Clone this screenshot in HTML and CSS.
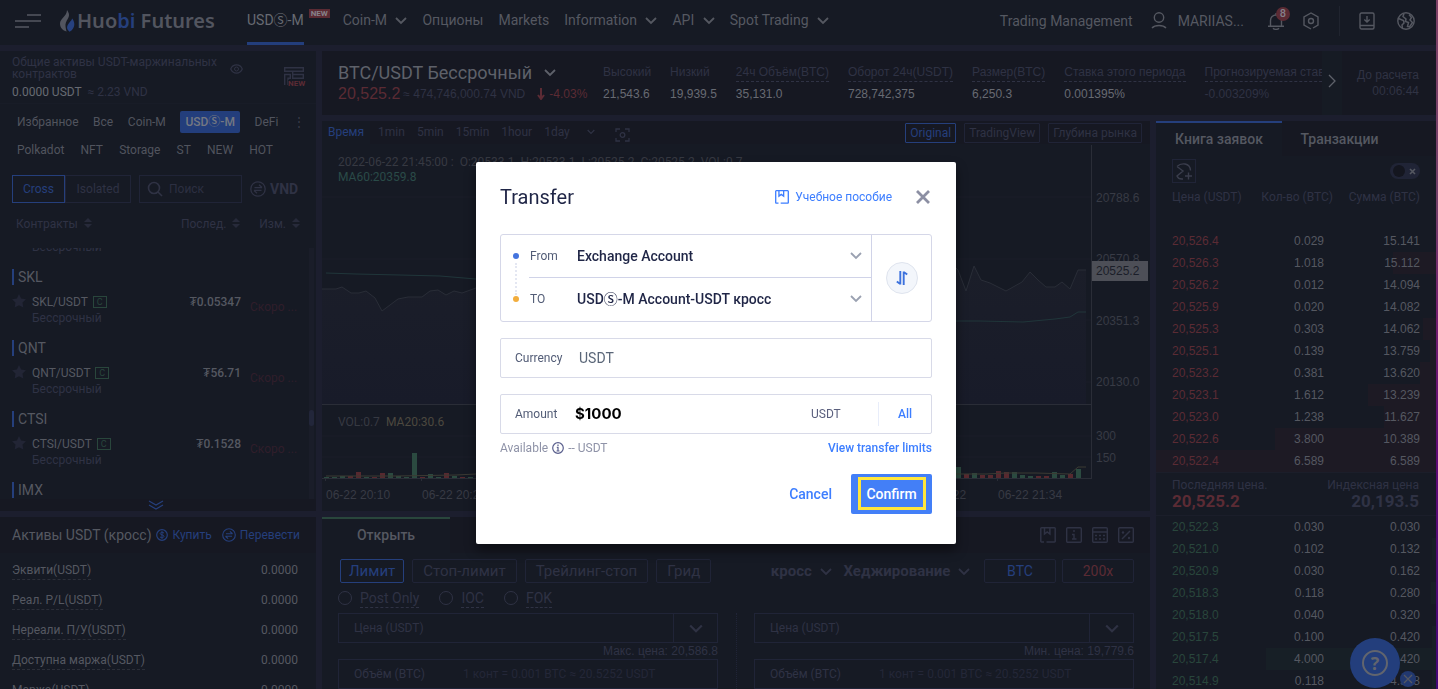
FILE: index.html
```html
<!DOCTYPE html>
<html lang="ru">
<head>
<meta charset="utf-8">
<title>Huobi Futures</title>
<link rel="stylesheet" href="styles.css">
</head>
<body>
<svg class="defs" aria-hidden="true">
  <symbol id="chev" viewBox="0 0 12 8"><path d="M1 1l5 5 5-5" fill="none" stroke="currentColor" stroke-width="1.8"/></symbol>
  <symbol id="star" viewBox="0 0 14 14"><path d="M7 0l2.1 4.5 4.9.7-3.5 3.4.8 5L7 11.200l-4.300 2.400.8-5L0 5.200l4.900-.7z" fill="currentColor"/></symbol>
  <symbol id="sort" viewBox="0 0 8 10"><path d="M4 0l4 4H0zM4 10l4-4H0z" fill="currentColor"/></symbol>
  <symbol id="book" viewBox="0 0 16 16"><path d="M4 15H1.500a.7.7 0 0 1-.7-.7V1.500a.7.7 0 0 1 .7-.7h13a.7.7 0 0 1 .7.7v12.800a.7.7 0 0 1-.7.7H6.500M4.500 1v6l2.700-2 2.700 2V1" fill="none" stroke="currentColor" stroke-width="1.5"/></symbol>
  <symbol id="swap" viewBox="0 0 16 16"><circle cx="8" cy="8" r="7.200" fill="none" stroke="currentColor" stroke-width="1.300"/><path d="M12 6.600H4.500M9 3.800l3 2.800M4 9.400h7.500M7 12.200L4 9.400" fill="none" stroke="currentColor" stroke-width="1.300"/></symbol>
</svg>

<div class="app">
<header class="top">
  <button class="burger" aria-label="Menu"><svg width="26" height="14" viewBox="0 0 26 14"><path d="M12 1h14M0 7h26M0 13h14" stroke="currentColor" stroke-width="1.600"/></svg></button>
  <a class="logo" href="#"><svg width="15" height="22" viewBox="0 0 15 22"><path d="M7 0c2.500 3.500 2.600 5.600 1 8.600C6.300 11.600 5 13.600 5.600 17c.2 1.700.5 3 1 4.600C3 20.500 0 18 0 13.500 0 8.600 6.800 6.500 7 0z" fill="#52555f"/><path d="M12.200 8.500c3 3.500 3.400 10-2.600 13.200-2.500-1.800-3.400-4.300-1.600-7.300 1.300-2.100 3.300-3.400 4.200-5.900z" fill="#26417f"/></svg><span>Huo<b>bi</b> Futures</span></a>
  <nav class="nav">
    <a class="on" href="#">USDⓈ-M<i class="new">NEW</i></a>
    <a href="#">Coin-M <svg class="chev"><use href="#chev"/></svg></a>
    <a href="#">Опционы</a>
    <a href="#">Markets</a>
    <a href="#">Information <svg class="chev"><use href="#chev"/></svg></a>
    <a href="#">API <svg class="chev"><use href="#chev"/></svg></a>
    <a href="#">Spot Trading <svg class="chev"><use href="#chev"/></svg></a>
  </nav>
  <div class="tools">
    <a href="#">Trading Management</a>
    <a class="user" href="#"><svg width="16" height="17" viewBox="0 0 16 17"><circle cx="8" cy="5.500" r="4.700" fill="none" stroke="currentColor" stroke-width="1.400"/><path d="M1 16c3-3.300 11-3.300 14 0" fill="none" stroke="currentColor" stroke-width="1.400"/></svg>MARIIAS...</a>
    <button class="bell" aria-label="Notifications"><svg width="16" height="18" viewBox="0 0 16 18"><path d="M8 1v2M0 14.200h16M2.500 14V8.500a5.500 5.500 0 0 1 11 0V14M5 16.200c1.500 1.500 4.500 1.500 6 0" fill="none" stroke="currentColor" stroke-width="1.400"/></svg><span class="count">8</span></button>
    <button class="hex" aria-label="Settings"><svg width="16" height="18" viewBox="0 0 16 18"><path d="M10 16l5-3V5L8 1 1 5v8l7 4" fill="none" stroke="currentColor" stroke-width="1.400"/><circle cx="8" cy="9" r="2.500" fill="none" stroke="currentColor" stroke-width="1.400"/></svg></button>
    <span class="bar"></span>
    <button class="dl" aria-label="Download"><svg width="16" height="18" viewBox="0 0 16 18"><rect x="1" y="1" width="14" height="16" rx="1.500" fill="none" stroke="currentColor" stroke-width="1.400"/><path d="M8 4v6M5.300 7.500L8 10l2.700-2.500M1 13.500h14" fill="none" stroke="currentColor" stroke-width="1.400"/></svg></button>
    <button aria-label="Language"><svg width="18" height="18" viewBox="0 0 18 18"><circle cx="9" cy="9" r="8.200" fill="none" stroke="currentColor" stroke-width="1.400"/><path d="M1.500 6.500l5 2 .5 2.500-2 2 .5 3.500M7 1.500l-1 3 3 2.500-.5 2.500 3 1-1 4 2 .5 3-4.500-2.500-2.500 1.500-2.500-2.500-3" fill="none" stroke="currentColor" stroke-width="1.500"/></svg></button>
  </div>
</header>

<main class="main">
  <aside class="left">
    <section class="panel markets">
      <div class="total">
        <div class="total-text"><p class="dim">Общие активы USDT-маржинальных контрактов</p><p><span class="lit">0.0000 USDT</span> <span class="dim vnd">≈ 2.23 VND</span></p></div>
        <svg class="eye" width="13" height="10" viewBox="0 0 13 10"><path d="M.7 5C3-.4 10-.4 12.300 5 10 10.400 3 10.400.7 5z" fill="none" stroke="currentColor" stroke-width="1.200"/><circle cx="6.500" cy="5" r="2" fill="none" stroke="currentColor"/></svg>
        <div class="grid-new"><svg width="20" height="18" viewBox="0 0 20 18"><path d="M.7.7h18.600v3.600H.7zM.7 18V7.500h5.600v3.800H4V18M8.700 4.500v3M8.700 7.500h10.600v3.800H8.700z" fill="none" stroke="currentColor" stroke-width="1.400"/></svg><b>NEW</b></div>
      </div>
      <div class="cats">
        <div class="cat-row r1"><button>Избранное</button><button>Все</button><button>Coin-M</button><button class="on">USDⓈ-M</button><button>DeFi</button><button class="more" aria-label="More">⋮</button></div>
        <div class="cat-row r2"><button>Polkadot</button><button>NFT</button><button>Storage</button><button>ST</button><button>NEW</button><button>HOT</button></div>
      </div>
      <div class="filter">
        <div class="seg"><button class="on">Cross</button><button>Isolated</button></div>
        <label class="search"><svg width="16" height="16" viewBox="0 0 16 16"><circle cx="7" cy="7" r="5.500" fill="none" stroke="currentColor" stroke-width="1.600"/><path d="M11 11l4 4" stroke="currentColor" stroke-width="1.600"/></svg><input type="text" placeholder="Поиск" aria-label="Поиск"></label>
        <button class="cur"><svg width="16" height="16"><use href="#swap"/></svg>VND</button>
      </div>
      <div class="list-head"><span>Контракты <svg class="sort"><use href="#sort"/></svg></span><span>Послед. <svg class="sort"><use href="#sort"/></svg></span><span>Изм. <svg class="sort"><use href="#sort"/></svg></span></div>
      <div class="list">
        <div class="list-in">
          <p class="cut">Бессрочный</p>
          <h3>SKL</h3>
          <div class="pair"><svg class="star"><use href="#star"/></svg><div><p class="name">SKL/USDT <em>C</em></p><p class="dim">Бессрочный</p></div><span class="price">₮0.05347</span><span class="soon">Скоро ...</span></div>
          <h3>QNT</h3>
          <div class="pair"><svg class="star"><use href="#star"/></svg><div><p class="name">QNT/USDT <em>C</em></p><p class="dim">Бессрочный</p></div><span class="price">₮56.71</span><span class="soon">Скоро ...</span></div>
          <h3>CTSI</h3>
          <div class="pair"><svg class="star"><use href="#star"/></svg><div><p class="name">CTSI/USDT <em>C</em></p><p class="dim">Бессрочный</p></div><span class="price">₮0.1528</span><span class="soon">Скоро ...</span></div>
          <h3>IMX</h3>
        </div>
        <div class="track"><span></span></div>
      </div>
      <div class="fold"><svg width="16" height="10" viewBox="0 0 16 10"><path d="M1 1l7 4 7-4M1 5l7 4 7-4" fill="none" stroke="currentColor" stroke-width="1.200"/></svg></div>
    </section>

    <section class="panel assets">
      <div class="assets-head"><h2>Активы USDT (кросс)</h2><a href="#"><svg width="12" height="12" viewBox="0 0 12 12"><circle cx="6" cy="6" r="5.300" fill="none" stroke="currentColor" stroke-width="1.200"/><path d="M8 4C6.500 3 4.200 3.300 4.200 4.600 4.200 6.300 8 5.400 8 7.300 8 8.700 5.500 9 4 8M6 2v8" fill="none" stroke="currentColor"/></svg>Купить</a><a href="#"><svg width="14" height="14"><use href="#swap"/></svg>Перевести</a></div>
      <dl>
        <div><dt>Эквити(USDT)</dt><dd>0.0000</dd></div>
        <div><dt>Реал. P/L(USDT)</dt><dd>0.0000</dd></div>
        <div><dt>Нереали. П/У(USDT)</dt><dd>0.0000</dd></div>
        <div><dt>Доступна маржа(USDT)</dt><dd>0.0000</dd></div>
        <div><dt>Маржа(USDT)</dt><dd>0.0000</dd></div>
      </dl>
    </section>
  </aside>

  <div class="work">
    <section class="panel ticker">
      <div class="sym">
        <button class="sym-name">BTC/USDT Бессрочный <svg class="chev"><use href="#chev"/></svg></button>
        <p class="quote"><b>20,525.2</b><span>≈ 474,746,000.74 VND</span><svg width="8" height="12" viewBox="0 0 8 12"><path d="M4 0v10M1 7l3 4 3-4" fill="none" stroke="currentColor" stroke-width="2"/></svg><i>-4.03%</i></p>
      </div>
      <div class="stats">
        <div><span>Высокий</span><b>21,543.6</b></div>
        <div><span>Низкий</span><b>19,939.5</b></div>
        <div><span class="tip">24ч Объём(BTC)</span><b>35,131.0</b></div>
        <div><span class="tip">Оборот 24ч(USDT)</span><b>728,742,375</b></div>
        <div><span class="tip">Размер(BTC)</span><b>6,250.3</b></div>
        <div><span class="tip">Ставка этого периода</span><b>0.001395%</b></div>
        <div><span class="tip">Прогнозируемая ставка</span><b class="off">-0.003209%</b></div>
      </div>
      <button class="next" aria-label="Next"><svg width="8" height="14" viewBox="0 0 8 14"><path d="M1 1l6 6-6 6" fill="none" stroke="currentColor" stroke-width="1.300"/></svg></button>
      <div class="settle"><span>До расчета</span><span>00:06:44</span></div>
    </section>

    <div class="desk">
      <div class="mid">
        <section class="panel chart">
          <div class="chart-bar">
            <button class="on">Время</button><button>1min</button><button>5min</button><button>15min</button><button>1hour</button><button>1day</button>
            <button class="more-t" aria-label="More"><svg class="chev"><use href="#chev"/></svg></button>
            <button class="snap" aria-label="Snapshot"><svg width="15" height="14" viewBox="0 0 15 14"><path d="M1 4V1h4M10 1h4v3M14 10v3h-4M5 13H1v-3" fill="none" stroke="currentColor" stroke-width="1.300"/><circle cx="7.500" cy="7" r="2.300" fill="none" stroke="currentColor" stroke-width="1.300"/></svg></button>
            <span class="views"><button class="on">Original</button><button>TradingView</button><button>Глубина рынка</button></span>
          </div>
          <svg class="plot" viewBox="322 144 828 367">
            <defs><linearGradient id="area" x1="0" y1="0" x2="0" y2="1"><stop offset="0" stop-color="#1b1e29"/><stop offset="1" stop-color="#181b29"/></linearGradient></defs>
            <path d="M322 197h769M322 259h769M322 320h769M322 382h769M322 436h769M322 457h769" stroke="#1a1d29"/>
            <path d="M322 404V289h14l6-2 9 6h8l7-2 9 7 7 13 16-12 10-2h14l8-6 8-1 8 5 8-4 8 2 14-5L956 268l2 2 8 21 8-25 7 14 9 3 16 8 16-9 8-10 8 8 8 7h9l7-5 8 7 8-19h8V404z" fill="url(#area)"/>
            <path d="M322 289h14l6-2 9 6h8l7-2 9 7 7 13 16-12 10-2h14l8-6 8-1 8 5 8-4 8 2 14-5M956 268l2 2 8 21 8-25 7 14 9 3 16 8 16-9 8-10 8 8 8 7h9l7-5 8 7 8-19h8" fill="none" stroke="#292d37"/>
            <path d="M326 273l30 1 44 1 40 1 36 3M956 321h24l43 1 32-3 15-2 8-5h8" fill="none" stroke="#20363a"/>
            <path d="M322 404.500h770M1091.500 145v333M322 478.500h770M325.500 478v3M421.500 478v3M997.500 478v3" stroke="#2a2d37" fill="none"/>
            <path d="M324 477h5v1h-5zM332 477h5v1h-5zM340 476h5v2h-5zM364 477h5v1h-5zM388 473h5v5h-5zM396 476h5v2h-5zM404 477h5v1h-5zM412 453h5v25h-5zM428 474h5v4h-5zM436 477h5v1h-5zM452 476h5v2h-5zM468 477h5v1h-5zM956 467h5v11h-5zM972 473h5v5h-5zM1012 472h5v6h-5zM1020 475h5v3h-5zM1028 476h5v2h-5zM1052 472h5v6h-5zM1060 475h5v3h-5zM1076 469h5v9h-5z" fill="#2b4a40"/>
            <path d="M348 476h5v2h-5zM356 472h5v6h-5zM372 477h5v1h-5zM380 473h5v5h-5zM420 477h5v1h-5zM444 473h5v5h-5zM460 477h5v1h-5zM964 474h5v4h-5zM980 475h5v3h-5zM988 475h5v3h-5zM996 471h5v7h-5zM1004 472h5v6h-5zM1036 476h5v2h-5zM1044 476h5v2h-5zM1068 474h5v4h-5z" fill="#57292f"/>
            <path d="M326 476h70l60-1 20-1M956 474h30l20-1h30l34 1 8-7h8" fill="none" stroke="#3b3a33"/>
            <g class="t-info"><text x="338" y="166">2022-06-22 21:45:00 :&#160; O:20533.1&#160; H:20533.1&#160; L:20525.2&#160; C:20525.2&#160; VOL:0.7</text><text x="338" y="181" class="ma60">MA60:20359.8</text><text x="338" y="426">VOL:0.7</text><text x="386" y="426" class="ma20">MA20:30.6</text></g>
            <g class="t-axis"><text x="1096" y="202">20788.6</text><text x="1096" y="263">20570.8</text><rect x="1092" y="261" width="56" height="20" fill="#4d4f57"/><text x="1096" y="275" class="tag">20525.2</text><text x="1096" y="325">20351.3</text><text x="1096" y="386">20130.0</text><text x="1096" y="440">300</text><text x="1096" y="462">150</text><text x="326" y="499">06-22 20:10</text><text x="422" y="499">06-22 20:22</text><text x="902" y="499">06-22 21:22</text><text x="998" y="499">06-22 21:34</text></g>
          </svg>
        </section>

        <section class="panel order">
          <div class="order-tabs"><button class="on">Открыть</button>
            <span class="order-icons">
              <svg width="16" height="16"><use href="#book"/></svg>
              <svg width="16" height="16" viewBox="0 0 16 16"><rect x=".7" y=".7" width="14.600" height="14.600" rx="1" fill="none" stroke="currentColor" stroke-width="1.400"/><path d="M8 3v2M6 7.500h2V12M6 12h4.500" fill="none" stroke="currentColor" stroke-width="1.400"/></svg>
              <svg width="16" height="16" viewBox="0 0 16 16"><rect x=".7" y=".7" width="14.600" height="14.600" rx="1" fill="none" stroke="currentColor" stroke-width="1.400"/><path d="M1 5h14M3 8.500h2M7 8.500h2M11 8.500h2M3 12h2M7 12h2M11 12h2" fill="none" stroke="currentColor" stroke-width="1.700"/></svg>
              <svg width="16" height="16" viewBox="0 0 16 16"><rect x=".7" y=".7" width="14.600" height="14.600" rx="1" fill="none" stroke="currentColor" stroke-width="1.400"/><path d="M4 12l8-8" stroke="currentColor" stroke-width="1.400"/><circle cx="5" cy="5.500" r="1.200" fill="currentColor"/><circle cx="11" cy="11" r="1.200" fill="currentColor"/></svg>
            </span>
          </div>
          <div class="order-body">
            <div class="types">
              <button class="on">Лимит</button><button>Стоп-лимит</button><button>Трейлинг-стоп</button><button>Грид</button>
              <span class="modes"><button class="mode">кросс <svg class="chev"><use href="#chev"/></svg></button><button class="mode">Хеджирование <svg class="chev"><use href="#chev"/></svg></button><button class="blue">BTC</button><button class="red">200x</button></span>
            </div>
            <div class="tif"><label><input type="radio" name="tif"><span>Post Only</span></label><label><input type="radio" name="tif"><span>IOC</span></label><label><input type="radio" name="tif"><span>FOK</span></label></div>
            <div class="forms">
              <div class="form">
                <div class="field"><input type="text" placeholder="Цена (USDT)" aria-label="Цена покупки"><button aria-label="Тип цены"><svg class="chev"><use href="#chev"/></svg></button></div>
                <p class="note">Макс. цена: 20,586.8</p>
                <label class="field vol"><span>Объём (BTC)</span><input type="text" placeholder="1 конт = 0.001 BTC ≈ 20.5252 USDT"></label>
              </div>
              <div class="form">
                <div class="field"><input type="text" placeholder="Цена (USDT)" aria-label="Цена продажи"><button aria-label="Тип цены"><svg class="chev"><use href="#chev"/></svg></button></div>
                <p class="note">Мин. цена: 19,779.6</p>
                <label class="field vol"><span>Объём (BTC)</span><input type="text" placeholder="1 конт = 0.001 BTC ≈ 20.5252 USDT"></label>
              </div>
            </div>
          </div>
        </section>
      </div>

      <section class="panel ob">
        <div class="ob-tabs"><button class="on">Книга заявок</button><button>Транзакции</button></div>
        <div class="ob-tools"><button class="sum" aria-label="Сумма"><svg width="16" height="17" viewBox="0 0 16 17"><path d="M1 3.500C5-.5 14-.5 14.500 7.500M1 3.500l6 4.500-6 5c1 2.500 3.500 3.300 6 3M9 13h7M12.500 9.500v7" fill="none" stroke="currentColor" stroke-width="1.400"/></svg></button><button class="toggle" aria-label="Переключатель"><span></span><svg width="7" height="7" viewBox="0 0 7 7"><path d="M1 1l5 5M6 1L1 6" stroke="currentColor" stroke-width="1.600"/></svg></button></div>
        <table class="ob-table">
          <thead><tr><th>Цена (USDT)</th><th>Кол-во (BTC)</th><th>Сумма (BTC)</th></tr></thead>
          <tbody class="asks">
            <tr><td>20,526.4</td><td>0.029</td><td>15.141</td></tr>
            <tr style="--d:43px"><td>20,526.3</td><td>1.018</td><td>15.112</td></tr>
            <tr><td>20,526.2</td><td>0.012</td><td>14.094</td></tr>
            <tr><td>20,525.9</td><td>0.020</td><td>14.082</td></tr>
            <tr style="--d:13px"><td>20,525.3</td><td>0.303</td><td>14.062</td></tr>
            <tr style="--d:6px"><td>20,525.1</td><td>0.139</td><td>13.759</td></tr>
            <tr style="--d:16px"><td>20,523.2</td><td>0.381</td><td>13.620</td></tr>
            <tr style="--d:68px"><td>20,523.1</td><td>1.612</td><td>13.239</td></tr>
            <tr style="--d:52px"><td>20,523.0</td><td>1.238</td><td>11.627</td></tr>
            <tr style="--d:161px"><td>20,522.6</td><td>3.800</td><td>10.389</td></tr>
            <tr style="--d:280px"><td>20,522.4</td><td>6.589</td><td>6.589</td></tr>
          </tbody>
        </table>
        <div class="last"><div><span>Последняя цена.</span><b>20,525.2</b></div><div><span>Индексная цена</span><b>20,193.5</b></div></div>
        <table class="ob-table">
          <tbody class="bids">
            <tr><td>20,522.3</td><td>0.030</td><td>0.030</td></tr>
            <tr style="--d:4px"><td>20,521.0</td><td>0.102</td><td>0.132</td></tr>
            <tr><td>20,520.9</td><td>0.030</td><td>0.162</td></tr>
            <tr style="--d:5px"><td>20,518.3</td><td>0.118</td><td>0.280</td></tr>
            <tr><td>20,518.0</td><td>0.040</td><td>0.320</td></tr>
            <tr style="--d:4px"><td>20,517.5</td><td>0.100</td><td>0.420</td></tr>
            <tr style="--d:170px"><td>20,517.4</td><td>4.000</td><td>4.420</td></tr>
            <tr style="--d:4px"><td>20,514.9</td><td>0.118</td><td>4.538</td></tr>
          </tbody>
        </table>
      </section>
    </div>
  </div>
</main>
</div>

<button class="help" aria-label="Помощь"><span>?</span></button>
<button class="help-x" aria-label="Закрыть"><svg width="10" height="10" viewBox="0 0 10 10"><path d="M1 1l8 8M9 1L1 9" stroke="currentColor" stroke-width="1.200"/></svg></button>

<div class="overlay">
  <form class="modal" role="dialog" aria-labelledby="dlg">
    <div class="m-head"><h1 id="dlg">Transfer</h1><a href="#"><svg width="14" height="14"><use href="#book"/></svg>Учебное пособие</a><button type="button" class="x" aria-label="Close"><svg width="14" height="14" viewBox="0 0 14 14"><path d="M1 1l12 12M13 1L1 13" stroke="currentColor" stroke-width="2.800"/></svg></button></div>
    <div class="route">
      <div class="rail"><i></i><i></i></div>
      <div class="ends">
        <div class="end"><label for="from">From</label><select id="from"><option>Exchange Account</option></select><svg class="chev"><use href="#chev"/></svg></div>
        <div class="end"><label for="to">TO</label><select id="to"><option>USDⓈ-M Account-USDT кросс</option></select><svg class="chev"><use href="#chev"/></svg></div>
      </div>
      <div class="flip"><button type="button" aria-label="Swap"><svg width="12" height="16" viewBox="0 0 12 16"><path d="M4.300 1v13.500M4.300 14L.8 11.500M7.700 15V1.500M7.700 2l3.500 2.500" fill="none" stroke="currentColor" stroke-width="1.900"/></svg></button></div>
    </div>
    <div class="box"><label for="ccy">Currency</label><input id="ccy" type="text" value="USDT"></div>
    <div class="box"><label for="amt">Amount</label><input id="amt" class="amt" type="text" value="$1000"><span class="unit">USDT</span><button type="button" class="all">All</button></div>
    <div class="avail"><span>Available <svg width="12" height="12" viewBox="0 0 12 12"><circle cx="6" cy="6" r="5.300" fill="none" stroke="currentColor" stroke-width="1.200"/><path d="M6 2.500v1.400M4.800 5.300H6V9M4.500 9h3" fill="none" stroke="currentColor" stroke-width="1.200"/></svg> <span class="none">-- USDT</span></span><a href="#">View transfer limits</a></div>
    <div class="acts"><button type="button" class="cancel">Cancel</button><button type="submit" class="ok">Confirm</button></div>
  </form>
</div>
</body>
</html>
```
FILE: styles.css
```css
* { box-sizing: border-box; margin: 0; padding: 0; }
:root {
  --gap: #1c1e2e;
  --panel: #161a24;
  --deep: #161822;
  --line: #202437;
  --dim: #2f3244;
  --text: #555861;
  --blue: #253f7c;
  --red: #5b2b34;
  --green: #29463c;
  --ui: Roboto, "Noto Sans CJK SC", sans-serif;
  --num: "Liberation Sans", Arial, sans-serif;
}
body { background: var(--gap); color: var(--text); font: 12px/16px var(--ui); height: 100vh; overflow: hidden; }
button, input, select { font: inherit; color: inherit; background: none; border: 0; outline: 0; }
input { min-width: 0; }
a { color: inherit; text-decoration: none; }
i, em { font-style: normal; }
svg { flex: none; }
.defs { position: absolute; width: 0; height: 0; }
.chev { width: 12px; height: 8px; }
.dim { color: var(--dim); }
.app { height: 100%; display: flex; flex-direction: column; gap: 6px; border-right: 2px solid; border-image: linear-gradient(#7e4167, #74406a 30%, #75206f 45%, #600b75 65%, #430777) 1; }
.panel { background: var(--panel); }

.top { height: 45px; flex: none; background: var(--panel); display: flex; align-items: center; padding: 0 21px 4px 15px; font-size: 14px; }
.burger { display: flex; }
.logo { display: flex; align-items: center; gap: 2px; margin-left: 19px; width: 187px; font: 600 20px/24px "Noto Sans", sans-serif; color: #52555f; }
.logo b { font-weight: inherit; color: var(--blue); }
.nav { display: flex; gap: 15px; flex: 1; white-space: nowrap; }
.nav a { line-height: 41px; height: 45px; margin-top: 4px; }
.nav .chev { margin-left: 5px; }
.nav .on { position: relative; border-bottom: 3px solid #233e7c; color: #676a72; margin-right: 24px; }
.new { position: absolute; left: 100%; top: 9px; margin-left: 5px; padding: 0 2px; height: 9px; font: 700 8px/9px var(--ui); background: var(--red); color: #86828a; }
.tools { display: flex; align-items: center; }
.tools button { display: flex; position: relative; }
.user { display: flex; align-items: center; gap: 11px; margin: 0 24px 0 18px; }
.count { position: absolute; left: 8px; top: -5px; width: 14px; height: 14px; border-radius: 50%; background: #5b2b34; font: 500 11px/14px var(--ui); text-align: center; color: #85808a; }
.hex { margin-left: 19px; }
.bar { width: 1px; height: 30px; background: #20242f; margin: 0 19px 0 20px; }
.dl { margin-right: 22px; }

.main { flex: 1; min-height: 0; display: grid; grid-template-columns: 316px minmax(0, 1fr); gap: 6px; }
.left { display: flex; flex-direction: column; gap: 6px; min-height: 0; }
.markets { height: 460px; flex: none; display: flex; flex-direction: column; }
.total { height: 53px; display: flex; padding: 5px 9px 0 12px; border-bottom: 1px solid #181c27; }
.total-text { width: 218px; line-height: 12px; }
.total-text p + p { margin-top: 5px; line-height: 14px; }
.lit { color: #676a72; }
.vnd { margin-left: 3px; }
.eye { margin: 8px 0 0; color: var(--dim); }
.grid-new { margin: 11px 0 0 41px; position: relative; color: var(--dim); }
.grid-new b { position: absolute; left: 4px; top: 13px; font: 700 8px/8px var(--ui); background: var(--panel); color: #5b2b34; }
.cats { padding: 7px 12px 0; }
.cat-row { display: flex; justify-content: space-between; align-items: center; height: 22px; }
.cat-row button { color: #51545e; }
.cat-row .on { background: #233e7c; height: 22px; padding: 0 5px; border-radius: 2px; color: #747882; }
.r1 { padding: 0 1px 0 5px; }
.r1 .on { font-weight: 500; }
.r2 { margin-top: 6px; padding: 0 31px 0 5px; }
.cat-row .more { width: 10px; color: #3a3d4a; }
.filter { display: flex; align-items: center; margin: 14px 15px 0 12px; height: 28px; color: var(--dim); }
.seg { display: flex; }
.seg button { height: 28px; width: 66px; border: 1px solid var(--line); }
.seg .on { width: 53px; border-color: #253f7c; color: #253f7c; }
.search { display: flex; align-items: center; gap: 6px; width: 103px; height: 28px; border: 1px solid var(--line); margin: 0 8px; padding-left: 7px; }
.search input { width: 60px; }
::placeholder { color: #2c2f41; opacity: 1; }
.cur { display: flex; align-items: center; gap: 4px; font-weight: 700; font-size: 14px; }
.list-head { display: flex; justify-content: space-between; padding: 13px 16px 0; height: 45px; color: var(--dim); }
.list-head span:nth-child(2) { margin-left: 70px; }
.sort { width: 8px; height: 10px; margin-left: 3px; color: #272a3a; }
.list { height: 251px; display: flex; overflow: hidden; }
.list-in { flex: 1; padding: 0 9px 0 12px; }
.cut { margin: -10px 0 11px 20px; height: 20px; line-height: 18px; color: var(--dim); }
.list h3 { font: 400 14px/16px var(--ui); border-left: 2px solid #253f7c; padding-left: 4px; margin-bottom: 9px; }
.pair { display: flex; height: 46px; line-height: 16px; }
.star { width: 14px; height: 14px; margin: 0 6px 0 0; color: #222535; }
.price { margin-left: auto; font-weight: 500; }
.name { height: 16px; }
.name em { display: inline-block; width: 14px; height: 12px; border: 1px solid var(--green); font-size: 9px; line-height: 10px; text-align: center; color: var(--green); margin-left: 2px; vertical-align: 1px; }
.soon { color: #301e2b; width: 50px; margin: 5px 0 0 9px; }
.track { width: 5px; margin-right: 2px; background: #1a1d29; }
.track span { display: block; height: 16px; margin-top: 162px; border-radius: 3px; background: #22263a; }
.fold { height: 12px; background: var(--deep); display: grid; place-items: center; color: #253f7c; padding-right: 4px; }

.assets { flex: 1; min-height: 0; overflow: hidden; }
.assets-head { height: 36px; background: var(--deep); display: flex; align-items: center; padding: 0 16px 0 12px; color: #253f7c; }
.assets-head h2 { font: 400 14px/20px var(--ui); color: var(--text); margin-right: auto; }
.assets-head a { display: flex; align-items: center; gap: 4px; margin-left: 4px; }
.assets-head a + a { margin-left: 10px; }
.assets dl { padding: 2px 18px 0 12px; }
.assets dl div { display: flex; justify-content: space-between; align-items: center; height: 30px; }
.assets dt { border-bottom: 1px dashed #2b2e38; padding-top: 2px; height: 20px; }

.work { display: flex; flex-direction: column; gap: 6px; min-width: 0; min-height: 0; }
.ticker { height: 64px; flex: none; display: flex; padding-left: 16px; background: var(--deep); font-family: var(--num); white-space: nowrap; }
.sym { width: 265px; padding-top: 10px; }
.sym-name { font: 400 18px/24px var(--ui); color: #5e616a; display: flex; align-items: center; gap: 12px; }
.quote { display: flex; align-items: center; line-height: 18px; color: var(--dim); }
.quote b { font: 400 16px/18px var(--num); color: var(--red); margin-right: 3px; }
.quote svg { margin: 0 4px 0 12px; color: var(--red); }
.quote i { color: var(--red); }
.stats { display: flex; gap: 19px; flex: 1; overflow: hidden; padding-top: 12px; }
.stats div { display: flex; flex-direction: column; align-items: flex-start; gap: 4px; }
.stats span { height: 19px; line-height: 18px; color: var(--dim); }
.stats .tip { border-bottom: 1px dashed var(--dim); }
.stats b { font-weight: 400; line-height: 16px; color: #676a72; }
.stats .off { color: var(--dim); }
.next { width: 20px; background: #161b24; color: #5e616a; }
.settle { width: 94px; padding: 16px 17px 0 0; text-align: right; display: flex; flex-direction: column; color: #303344; }

.desk { flex: 1; min-height: 0; display: grid; grid-template-columns: minmax(0, 1fr) 280px; gap: 6px; }
.mid { display: flex; flex-direction: column; gap: 6px; min-height: 0; }
.chart { flex: none; }
.chart-bar { height: 23px; display: flex; align-items: center; color: var(--dim); background: var(--deep); }
.chart-bar button { margin-right: 12px; padding-bottom: 2px; }
.chart-bar .on { color: #253f7c; }
.chart-bar > .on { padding: 0 6px 2px; background: var(--panel); height: 23px; margin-right: 8px; }
.chart-bar .chev { width: 8px; }
.chart-bar .more-t { margin-left: 5px; }
.chart-bar .snap { margin: 4px 0 0 8px; padding: 0; display: flex; }
.views { margin-left: auto; display: flex; gap: 8px; padding-right: 8px; }
.views button { border: 1px solid var(--line); margin: 0; height: 20px; padding: 0 4px; border-radius: 1px; }
.views .on { border-color: #253f7c; }
.plot { display: block; width: 100%; }
.t-info { font: 12px var(--ui); fill: #363942; }
.ma60 { fill: #2a4b48; }
.ma20 { fill: #4c483f; }
.t-axis { font: 12px var(--num); fill: #383b45; }
.t-axis .tag { fill: #1b1e29; }

.order { flex: 1; min-height: 0; overflow: hidden; }
.order-tabs { height: 36px; display: flex; justify-content: space-between; background: var(--deep); }
.order-tabs button { width: 128px; border-top: 2px solid var(--green); padding-bottom: 2px; background: var(--panel); font-size: 14px; font-weight: 500; }
.order-icons { display: flex; gap: 10px; align-items: center; padding-right: 16px; color: var(--dim); }
.order-body { padding: 6px 16px 0; color: var(--dim); }
.types { display: flex; gap: 8px; height: 24px; font-size: 15px; padding-left: 2px; }
.types button { border: 1px solid var(--line); padding: 0 10px; border-radius: 2px; }
.types .on { border-color: #253f7c; color: #253f7c; padding: 0 8px; }
.modes { margin-left: auto; display: flex; gap: 6px; }
.types .mode { border: 0; padding: 0 6px 0 0; font-weight: 700; }
.mode .chev { margin-left: 4px; }
.modes .blue, .modes .red { width: 72px; font-size: 14px; padding: 0; }
.modes .blue { color: #253f7c; margin-left: 2px; }
.modes .red { color: var(--red); }
.tif { display: flex; gap: 20px; font-size: 14px; height: 30px; padding-top: 6px; }
.tif label { display: flex; gap: 8px; }
.tif input { appearance: none; width: 14px; height: 14px; border: 1px solid var(--dim); border-radius: 50%; margin-top: 2px; }
.tif span { border-bottom: 1px dashed var(--dim); line-height: 18px; height: 19px; }
.forms { display: grid; grid-template-columns: 1fr 1fr; gap: 36px; position: relative; }
.forms::before { content: ""; position: absolute; left: 50%; top: 0; bottom: 0; border-left: 1px dotted var(--line); }
.field { display: flex; height: 30px; border: 1px solid var(--line); padding-left: 15px; align-items: center; }
.field input { flex: 1; }
.field button { width: 44px; height: 28px; border-left: 1px solid var(--line); }
.field .chev { width: 14px; height: 10px; vertical-align: middle; }
.field > input:first-child::placeholder { color: var(--dim); }
.note { text-align: right; height: 16px; font-family: var(--num); line-height: 16px; }
.vol input { margin-left: 38px; }
.vol ::placeholder { color: #242738; }

.ob { overflow: hidden; }
.ob-tabs { height: 35px; display: flex; background: var(--deep); font-size: 14px; font-weight: 500; }
.ob-tabs button { width: 126px; height: 35px; border-top: 2px solid transparent; padding-bottom: 2px; }
.ob-tabs button + button { width: 115px; }
.ob-tabs .on { background: var(--panel); border-color: #253f7c; }
.ob-tools { display: flex; justify-content: space-between; align-items: center; padding: 3px 16px 0; height: 27px; }
.sum { width: 24px; height: 24px; border: 1px solid var(--line); display: grid; place-items: center; color: #3a3d4c; }
.toggle { width: 30px; height: 16px; border-radius: 8px; background: #202436; display: flex; align-items: center; gap: 4px; padding-left: 3px; }
.toggle span { width: 12px; height: 12px; border-radius: 50%; background: #14161f; }
.ob-table { width: 100%; border-collapse: collapse; table-layout: fixed; font-family: var(--num); white-space: nowrap; }
.ob-table th { font: 400 12px/16px var(--ui); color: var(--dim); height: 47px; padding: 6px 0 0; vertical-align: top; text-align: right; }
.ob-table td { height: 22px; text-align: right; }
.ob-table tr > :first-child { text-align: left; padding-left: 16px; width: 90px; }
.ob-table tr > :nth-child(2) { width: 87px; padding-right: 9px; }
.ob-table tr > :last-child { padding-right: 16px; }
.ob-table tr > th:nth-child(2) { padding-right: 0; }
.asks tr { background: linear-gradient(#1d1a24, #1d1a24) right / var(--d, 0) 100% no-repeat; }
.bids tr { background: linear-gradient(#171f26, #171f26) right / var(--d, 0) 100% no-repeat; }
.asks td:first-child { color: var(--red); }
.bids td:first-child { color: var(--green); }
.last { height: 44px; display: flex; justify-content: space-between; padding: 4px 17px 0 16px; border: solid #1b1e2a; border-width: 1px 0; color: var(--dim); }
.last div { display: flex; flex-direction: column; }
.last b { font: 700 17px/16px var(--ui); }
.last div:first-child b { color: var(--red); }
.last div + div { text-align: right; }

.help { position: fixed; right: 38px; bottom: 1px; width: 50px; height: 50px; border-radius: 50%; background: #233e7c; display: grid; place-items: center; color: #62656e; }
.help span { width: 26px; height: 26px; border: 2px solid; border-radius: 50%; font: 700 18px/22px "Open Sans", sans-serif; }
.help-x { position: fixed; right: 22px; bottom: 2px; width: 16px; height: 16px; border-radius: 50%; background: #22386f; display: grid; place-items: center; }

.overlay { position: fixed; inset: 0; display: grid; place-items: center; padding: 16px 6px 0 0; }
.modal { width: 480px; background: #fff; border-radius: 2px; padding: 24px 24px 30px; box-shadow: 0 6px 12px rgba(0, 0, 0, .45); color: #1f2546; }
.m-head { display: flex; align-items: center; height: 22px; margin-bottom: 26px; }
.m-head h1 { font: 400 20px/24px var(--ui); margin-right: auto; }
.m-head a { display: flex; align-items: center; gap: 6px; color: #3d7eff; }
.x { display: flex; color: #8c8fa3; margin: 0 2px 0 24px; }
.route { display: flex; height: 88px; border: 1px solid #d5d7e8; border-radius: 3px; }
.rail { width: 28px; position: relative; }
.rail::before { content: ""; position: absolute; left: 14px; top: 28px; height: 32px; border-left: 2px dotted #e4e7f2; }
.rail i { position: absolute; left: 12px; top: 18px; width: 6px; height: 6px; border-radius: 50%; background: #4474de; }
.rail i + i { top: 61px; background: #f2ad3d; }
.ends { flex: 1; }
.end { display: flex; align-items: center; height: 42px; padding-right: 9px; color: #9aa1b1; }
.end + .end { border-top: 1px solid #d0d3e8; height: 43px; }
.end label { width: 48px; padding-left: 1px; color: #525c76; }
.end select { flex: 1; appearance: none; font-size: 14px; font-weight: 500; line-height: 20px; height: 22px; color: #1f2546; }
.flip { width: 60px; border-left: 1px solid #d0d3e8; display: grid; place-items: center; }
.flip button { width: 32px; height: 32px; border-radius: 50%; border: 1px solid #dfe4ee; background: #f3f6fb; color: #3d72dd; display: grid; place-items: center; }
.box { display: flex; align-items: center; height: 40px; border: 1px solid #d8dae8; border-radius: 2px; margin-top: 16px; padding-left: 14px; color: #525c76; }
.box label { width: 60px; }
.box input { flex: 1; font-size: 14px; margin-left: 4px; color: #5a6678; }
.box .amt { font: 700 15px/20px Inter, sans-serif; color: #000; margin-left: 0; }
.unit { width: 67px; color: #5a5f7d; }
.all { width: 53px; height: 24px; border-left: 1px solid #e8edfa; color: #3d7eff; font-weight: 500; }
.avail { display: flex; justify-content: space-between; margin-top: 6px; color: #8f93a8; }
.avail svg { vertical-align: -2px; color: #5a5f8d; margin-left: 1px; }
.none { margin-left: 1px; }
.avail a { color: #3d7eff; font-weight: 500; }
.acts { display: flex; justify-content: flex-end; gap: 19px; margin-top: 18px; font-size: 14px; font-weight: 500; }
.cancel { color: #3d7eff; }
.ok { position: relative; width: 81px; height: 40px; background: #437ff7; color: #fff; border-radius: 2px; }
.ok::after { content: ""; position: absolute; inset: 3px 6px 4px 7px; border: 3px solid #ffe63c; }
```
